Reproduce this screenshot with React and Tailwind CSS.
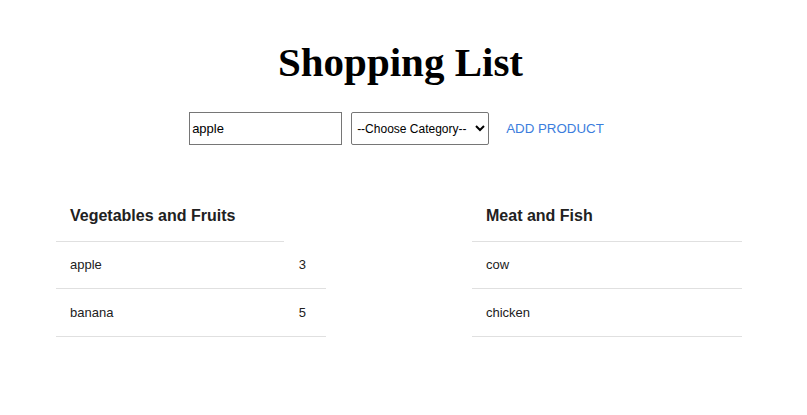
import React, { useState } from 'react';

const lists = [
  {
    title: 'Vegetables and Fruits',
    items: [
      { name: 'apple', qty: 3 },
      { name: 'banana', qty: 5 },
    ],
  },
  {
    title: 'Meat and Fish',
    items: [
      { name: 'cow' },
      { name: 'chicken' },
    ],
  },
];

const CategoryList = ({ title, items, short }) => (
  <div className="w-[270px] font-['Liberation_Sans',Arial,sans-serif] text-[#212121]">
    <div className={`h-[53px] flex items-center pl-[14px] pt-[2px] border-b border-[#e0e0e0] ${short ? 'w-[228px]' : 'w-full'}`}>
      <h3 className="text-[16px] font-bold">{title}</h3>
    </div>
    {items.map((item, i) => (
      <div
        key={item.name}
        className={`${i === 0 ? 'h-[47px]' : 'h-[48px]'} flex items-center justify-between pl-[14px] pr-[20px] border-b border-[#e0e0e0] text-[13px]`}
      >
        <span>{item.name}</span>
        {item.qty !== undefined && <span>{item.qty}</span>}
      </div>
    ))}
  </div>
);

const App = () => {
  const [product, setProduct] = useState('apple');

  return (
    <div className="min-h-screen bg-white">
      <h1 className="pt-[38px] pr-[6px] text-center text-[41px] leading-[48px] font-bold font-['Liberation_Serif',serif] text-black">
        Shopping List
      </h1>
      <div className="mt-[26px] pr-[14px] flex items-center justify-center font-['Liberation_Sans',Arial,sans-serif]">
        <input
          value={product}
          onChange={(e) => setProduct(e.target.value)}
          className="w-[153px] h-[33px] border border-[#767676] px-[2px] text-[13px] text-black outline-none"
        />
        <select className="ml-[9px] w-[138px] h-[33px] border border-[#767676] rounded-[2px] text-[12px] text-black pl-[1px]">
          <option>--Choose Category--</option>
          <option>Vegetables and Fruits</option>
          <option>Meat and Fish</option>
        </select>
        <button className="ml-[17px] text-[13.33px] text-[#3b7ddd] uppercase">
          Add Product
        </button>
      </div>
      <div className="mt-[44px] flex pl-[56px] gap-[146px]">
        <CategoryList title={lists[0].title} items={lists[0].items} short />
        <CategoryList title={lists[1].title} items={lists[1].items} />
      </div>
    </div>
  );
};

export default App;
